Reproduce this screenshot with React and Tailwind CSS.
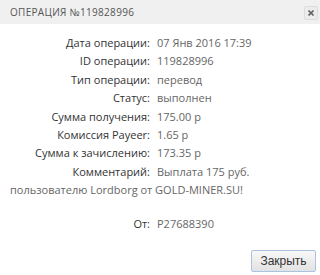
import React from 'react';

const rows = [
  ['Дата операции:', '07 Янв 2016 17:39'],
  ['ID операции:', '119828996'],
  ['Тип операции:', 'перевод'],
  ['Статус:', 'выполнен'],
  ['Сумма получения:', '175.00 р'],
  ['Комиссия Payeer:', '1.65 р'],
  ['Сумма к зачислению:', '173.35 р'],
  ['Комментарий:', 'Выплата 175 руб.'],
];

export default function App() {
  return (
    <div className="w-[320px] h-[275px] bg-white overflow-hidden" style={{ fontFamily: '"Open Sans", sans-serif' }}>
      {/* header */}
      <div className="flex h-[24px] items-center justify-between bg-[#f0f0f0] pl-[10px] pr-[2px]">
        <span className="text-[10px] tracking-[0.3px] text-[#555]">ОПЕРАЦИЯ №119828996</span>
        <button className="mt-[2px] flex h-[14px] w-[14px] items-center justify-center rounded-[2px] border border-[#dcdcdc] bg-[#ececec]">
          <svg width="6" height="6" viewBox="0 0 6 6"><path d="M0.5 0.5L5.5 5.5M5.5 0.5L0.5 5.5" stroke="#666" strokeWidth="1.6" /></svg>
        </button>
      </div>

      <div className="pt-[10px] text-[11px] leading-[18.4px]">
        {rows.map(([k, v]) => (
          <div key={k} className="grid grid-cols-[150px_1fr] gap-x-[7px]">
            <span className="text-right text-[#333]">{k}</span>
            <span className="text-[#666]">{v}</span>
          </div>
        ))}
        <div className="pl-[10px] text-[#666]">пользователю Lordborg от GOLD-MINER.SU!</div>
        <div className="mt-[15.6px] grid grid-cols-[150px_1fr] gap-x-[7px]">
          <span className="text-right text-[#333]">От:</span>
          <span className="text-[#666]">P27688390</span>
        </div>
      </div>

      <div className="flex justify-end pr-[4px] pt-[16px]">
        <button
          className="h-[22px] w-[65px] rounded-[2px] border border-[#a9c3e0] bg-gradient-to-b from-[#f8f8f8] to-[#e2e2e2] text-[12px] text-[#333]"
          style={{ fontFamily: '"Liberation Sans", Arial, sans-serif' }}
        >
          Закрыть
        </button>
      </div>
    </div>
  );
}
